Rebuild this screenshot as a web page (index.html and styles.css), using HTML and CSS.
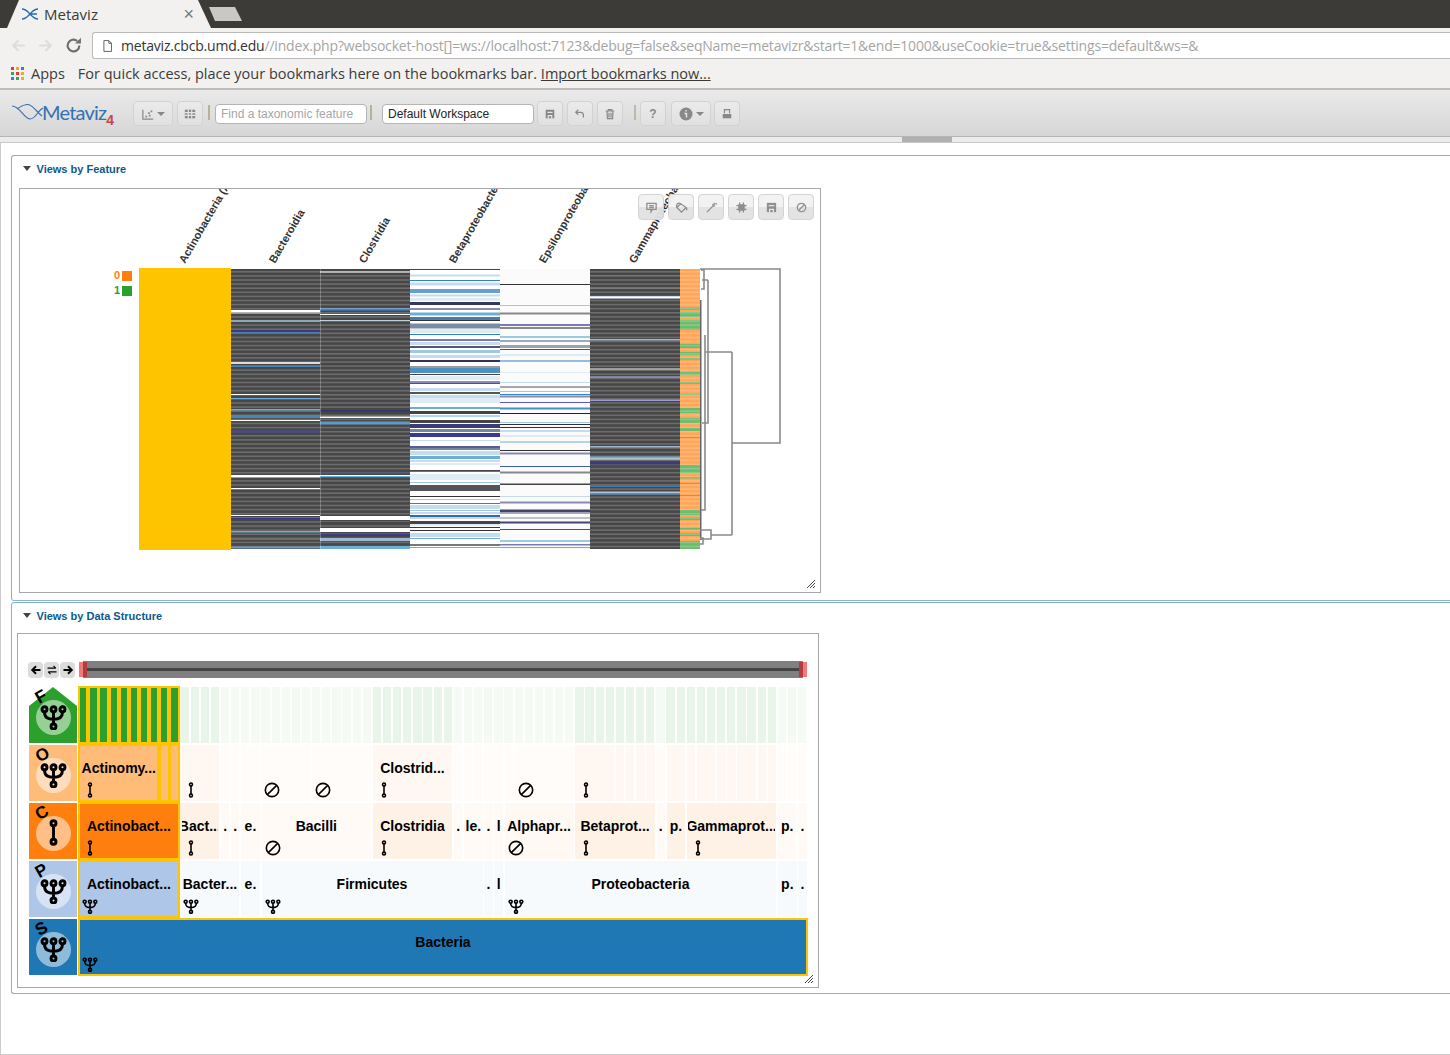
FILE: index.html
```html
<!DOCTYPE html>
<html lang="en">
<head>
    <meta charset="UTF-8">
    <meta name="viewport" content="width=device-width, initial-scale=1.0">
    <title>Metaviz</title>
    <link rel="stylesheet" href="styles.css">
</head>
<body>
    <!-- Icons used by the icicle chart -->
    <svg class="defs" width="0" height="0">
        <symbol id="fork" viewBox="0 0 24 24">
            <path d="M12 8V18.5M4 8c0 5 3 6.5 8 6.5s8-1.500 8-6.500"/>
            <circle cx="4" cy="5.500" r="2.200"/>
            <circle cx="12" cy="5.500" r="2.200"/>
            <circle cx="20" cy="5.500" r="2.200"/>
            <circle cx="12" cy="20.800" r="2.200"/>
        </symbol>
        <symbol id="seg" viewBox="0 0 24 24">
            <path d="M12 6V18"/>
            <circle cx="12" cy="3.800" r="2.200"/>
            <circle cx="12" cy="20.200" r="2.200"/>
        </symbol>
        <symbol id="ban" viewBox="0 0 24 24">
            <circle cx="12" cy="12" r="10"/>
            <path d="M5 19L19 5"/>
        </symbol>
    </svg>

    <!-- Browser window -->
    <div class="tabstrip">
        <div class="tab">
            <svg class="favicon" viewBox="0 0 16 12"><path d="M0 1C4 1 6 4 8 6S12 11 16 11M0 11C4 11 6 8 8 6S12 1 16 1M9 6H15"/></svg>
            <span class="tab-title">Metaviz</span>
            <span class="tab-close">×</span>
        </div>
        <div class="newtab"></div>
    </div>
    <div class="navbar">
        <svg class="nav-icon faint" viewBox="0 0 16 16"><path d="M14 8H3M8 3L3 8L8 13"/></svg>
        <svg class="nav-icon faint" viewBox="0 0 16 16"><path d="M2 8H13M8 3L13 8L8 13"/></svg>
        <svg class="nav-icon reload" viewBox="0 0 16 16"><path d="M13.500 8A5.500 5.500 0 1 1 11.500 3.800"/><path class="solid" d="M9.500 6H15V0.800Z"/></svg>
        <div class="urlbar">
            <svg class="doc-icon" viewBox="0 0 10 13"><path d="M1 .5H6.500L9.500 3.500V12.500H1ZM6.500 .5V3.500H9.500"/></svg>
            <span class="url-host">metaviz.cbcb.umd.edu</span><span class="url-rest">//index.php?websocket-host[]=ws://localhost:7123&amp;debug=false&amp;seqName=metavizr&amp;start=1&amp;end=1000&amp;useCookie=true&amp;settings=default&amp;ws=&amp;</span>
        </div>
    </div>
    <div class="bookmarks">
        <div class="apps-grid">
            <i class="r"></i><i class="y"></i><i class="b"></i>
            <i class="g"></i><i class="r"></i><i class="y"></i>
            <i class="b"></i><i class="g"></i><i class="y"></i>
        </div>
        <span class="apps">Apps</span>
        <span>For quick access, place your bookmarks here on the bookmarks bar. <u>Import bookmarks now...</u></span>
    </div>

    <!-- App toolbar -->
    <div class="toolbar">
        <div class="logo">
            <svg class="logo-wave" viewBox="0 0 31 16"><path d="M0 2C8 2 12 15 18 15S26 6 31 4M5 5C9 2 12 .5 16 .5S25 8 30 12"/></svg>
            <span class="logo-name">Metaviz</span><span class="logo-num">4</span>
        </div>
        <button class="tbtn wide"><svg viewBox="0 0 14 14"><path d="M1 2V13H13"/><path class="dots" d="M4 9h2v2H4zM7 5h2v2H7zM10 3h2v2h-2zM8 8h2v2H8z"/></svg><b class="caret"></b></button>
        <button class="tbtn"><svg viewBox="0 0 14 14"><path class="solid" d="M1 2H13V12H1Z"/><path class="cut" d="M1 5.500H13M1 8.500H13M5 2V12M9 2V12"/></svg></button>
        <i class="sep"></i>
        <input class="field search" type="text" placeholder="Find a taxonomic feature">
        <i class="sep"></i>
        <input class="field workspace" type="text" value="Default Workspace">
        <button class="tbtn"><svg viewBox="0 0 14 14"><path class="solid" d="M2 2H12V12H2Z"/><path class="cut" d="M4 5H10M5 12V9H9V12"/></svg></button>
        <button class="tbtn"><svg viewBox="0 0 14 14"><path d="M5 2L2 5L5 8M2 5H8C10.500 5 11 7 11 8.500V11"/></svg></button>
        <button class="tbtn"><svg viewBox="0 0 14 14"><path d="M2 3.500H12M5 3.500V2H9V3.500M3.500 3.500L4 12.500H10L10.500 3.500M5.800 5.500V11M8.200 5.500V11"/></svg></button>
        <i class="sep blue"></i>
        <button class="tbtn help">?</button>
        <button class="tbtn wide info"><svg viewBox="0 0 14 14"><circle class="solid" cx="7" cy="7" r="6.500"/><path class="cut" d="M7 3V4.500M5.500 6.500H7.500V10.500"/></svg><b class="caret"></b></button>
        <button class="tbtn"><svg viewBox="0 0 14 14"><path d="M4 6V2H10V6"/><path class="solid" d="M2 7H12V12H2Z"/></svg></button>
    </div>
    <div class="splitter"><div class="grip"></div></div>

    <main class="content">
        <section class="panel feature-panel">
            <h3 class="panel-head"><i class="arrow"></i>Views by Feature</h3>
            <div class="chart-box heat-box">
                <svg id="heatmap" class="heatmap" viewBox="20 189 800 403" width="800" height="403"></svg>
                <div class="chart-btns">
                    <button class="cbtn"><svg viewBox="0 0 14 14"><path d="M2 2.500H12V9H8L6.500 11.500V9H2ZM4.500 5H9.500M4.500 7H9.500"/></svg></button>
                    <button class="cbtn"><svg viewBox="0 0 14 14"><path d="M6 3L12 7L7 12L2 7ZM2 7C1 4 3 1 6 3M12 7L13 10"/></svg></button>
                    <button class="cbtn"><svg viewBox="0 0 14 14"><path d="M2 12L9 5M8 3.500L10.500 6M10 2V4M11 3H13"/></svg></button>
                    <button class="cbtn"><svg viewBox="0 0 14 14"><path class="solid" d="M3.500 3.500H10.500V10.500H3.500Z"/><path d="M5 1.500V12.500M9 1.500V12.500M1.500 5H12.500M1.500 9H12.500"/></svg></button>
                    <button class="cbtn"><svg viewBox="0 0 14 14"><path class="solid" d="M2 2H12V12H2Z"/><path class="cut" d="M4 5H10M5 12V9H9V12"/></svg></button>
                    <button class="cbtn"><svg viewBox="0 0 14 14"><circle cx="7" cy="7" r="4.500"/><path d="M4 10L10 4"/></svg></button>
                </div>
                <svg class="resize" viewBox="0 0 8 8"><path d="M0 8L8 0M3 8L8 3M6 8L8 6"/></svg>
            </div>
        </section>

        <section class="panel structure-panel">
            <h3 class="panel-head"><i class="arrow"></i>Views by Data Structure</h3>
            <div class="chart-box tree-box">
                <div class="tree-nav">
                    <div class="tree-btns">
                        <button class="nav-btn"><svg viewBox="0 0 16 16"><path d="M14 8H3M8 3L3 8L8 13"/></svg></button>
                        <button class="nav-btn swap"><svg viewBox="0 0 16 16"><path d="M2 5.500H13M10 2.500L13 5.500M14 10.500H3M6 13.500L3 10.500"/></svg></button>
                        <button class="nav-btn"><svg viewBox="0 0 16 16"><path d="M2 8H13M8 3L13 8L8 13"/></svg></button>
                    </div>
                    <div class="brush">
                        <i class="brush-line"></i>
                        <i class="handle left"></i>
                        <i class="handle right"></i>
                    </div>
                </div>
                <div id="icicle" class="icicle"></div>
                <svg class="resize" viewBox="0 0 8 8"><path d="M0 8L8 0M3 8L8 3M6 8L8 6"/></svg>
            </div>
        </section>
    </main>

    <script src="app.js"></script>
</body>
</html>
```
FILE: styles.css
```css
/* General styling */
* {
    box-sizing: border-box;
}
html, body {
    margin: 0;
    height: 100%;
    overflow: hidden;
}
body {
    background: white;
    color: #333;
    font-family: 'Liberation Sans', Arial, sans-serif;
}
.defs {
    position: absolute;
}
i {
    display: block;
}
/* Browser window */
.tabstrip {
    display: flex;
    height: 28px;
    background: #3c3b37;
}
.tab {
    display: flex;
    align-items: center;
    width: 212px;
    height: 28px;
    padding: 0 18px 0 22px;
    background: #f2f1f0;
    clip-path: polygon(7px 100%, 19px 0, 198px 0, 211px 100%);
}
.favicon {
    width: 16px;
    height: 12px;
    fill: none;
    stroke: #2b6cb0;
    stroke-width: 1.3;
}
.tab-title {
    flex: 1;
    margin-left: 6px;
    font: 15px 'Open Sans', sans-serif;
    color: #3c3b37;
}
.tab-close {
    color: #777;
    font-size: 18px;
    line-height: 1;
}
.newtab {
    width: 33px;
    height: 14px;
    margin: 7px 0 0 -3px;
    background: #c9c8c6;
    clip-path: polygon(0 0, 26px 0, 33px 100%, 6px 100%);
}
.navbar {
    display: flex;
    align-items: center;
    height: 32px;
    padding: 3px 0 0 10px;
    background: #f2f1f0;
}
.nav-icon {
    width: 17px;
    height: 17px;
    margin-right: 10px;
    fill: none;
    stroke: #ddd;
    stroke-width: 2;
}
.reload {
    margin: 0 10px 0 1px;
    stroke: #6e6e6e;
}
.reload .solid {
    fill: #6e6e6e;
    stroke: none;
}
.urlbar {
    display: flex;
    align-items: center;
    flex: 1;
    height: 27px;
    padding-left: 10px;
    background: white;
    border: 1px solid #bbb;
    border-right: none;
    border-radius: 3px 0 0 3px;
    font: 14px 'Open Sans', sans-serif;
    letter-spacing: -.195px;
    white-space: nowrap;
    overflow: hidden;
}
.doc-icon {
    width: 9px;
    height: 12px;
    margin-right: 9px;
    fill: none;
    stroke: #555;
}
.url-host {
    color: #333;
}
.url-rest {
    color: #a5a5a5;
}
.bookmarks {
    display: flex;
    align-items: center;
    height: 28px;
    padding: 0 0 2px 11px;
    background: #f2f1f0;
    font: 14.5px 'Open Sans', sans-serif;
    color: #3c3b37;
    white-space: nowrap;
}
.apps-grid {
    display: grid;
    grid-template-columns: repeat(3, 3px);
    gap: 2px;
    margin: 0 7px 0 0;
    width: 13px;
}
.apps-grid i {
    height: 3px;
}
.apps-grid .r { background: #e53935; }
.apps-grid .y { background: #f5a623; }
.apps-grid .b { background: #3b78e7; }
.apps-grid .g { background: #34a853; }
.apps {
    margin-right: 13px;
}
/* App toolbar */
.toolbar {
    display: flex;
    align-items: center;
    height: 49px;
    padding: 1px 0 0 12px;
    background: linear-gradient(#eaeaea, #d6d6d6);
    border-top: 2px solid #bdbdbd;
    border-bottom: 1px solid #b5b5b5;
}
.logo {
    display: flex;
    align-items: center;
    position: relative;
    width: 121px;
    height: 26px;
}
.logo-wave {
    width: 31px;
    height: 16px;
    fill: none;
    stroke: #3d75b5;
    stroke-width: 1.2;
    margin-top: -4px;
}
.logo-name {
    margin: -4px 0 0 -1px;
    font: 20px 'Lato', sans-serif;
    color: #3471b3;
    letter-spacing: -.8px;
}
.logo-num {
    margin-top: 12px;
    font: bold 14px 'Liberation Sans', sans-serif;
    color: #c9444f;
}
.tbtn, .cbtn {
    display: flex;
    align-items: center;
    justify-content: center;
    gap: 3px;
    width: 26px;
    height: 25px;
    margin: 0 4px 0 0;
    padding: 0;
    background: linear-gradient(#ebebeb, #e0e0e0);
    border: 1px solid #d2d2d2;
    border-radius: 4px;
}
.tbtn svg, .cbtn svg {
    width: 12px;
    height: 12px;
    fill: none;
    stroke: #888;
    stroke-width: 1.4;
}
.tbtn .solid, .cbtn .solid {
    fill: #888;
    stroke: none;
}
.tbtn .cut, .cbtn .cut {
    stroke: #e6e6e6;
}
.tbtn .dots {
    fill: #888;
    stroke: none;
}
.tbtn.wide {
    width: 40px;
}
.caret {
    width: 0;
    height: 0;
    border: 4px solid transparent;
    border-top-color: #888;
    border-bottom: none;
}
.help {
    color: #888;
    font: bold 12px 'Liberation Sans', sans-serif;
}
.tbtn.info {
    margin: 0 3px 0 1px;
}
.info svg {
    width: 14px;
    height: 14px;
}
.sep {
    width: 2px;
    height: 15px;
    margin: 0 5px 2px 1px;
    background: #b9b09c;
}
.sep.blue {
    margin: 0 4px 2px 7px;
    background: linear-gradient(#a9bdd2, #c9b68e);
}
.field {
    width: 152px;
    height: 20px;
    margin-right: 4px;
    padding: 0 5px;
    background: white;
    border: 1px solid #b4b4b4;
    border-radius: 4px;
    outline: none;
    font: 12px 'Liberation Sans', sans-serif;
    color: #222;
}
.field::placeholder {
    color: #a6a6a6;
}
.search {
    margin-right: 2px;
}
.workspace {
    margin: 0 3px 0 5px;
}
.splitter {
    height: 6px;
    padding-left: 902px;
    background: #ececec;
    border-bottom: 1px solid #c8c8c8;
}
.grip {
    width: 50px;
    height: 5px;
    background: #b0b0b0;
}
/* Panels */
.content {
    height: 912px;
    padding: 12px 0 0 10px;
    border-left: 1px solid #ccc;
    border-bottom: 1px solid #ccc;
}
.panel {
    border: 1px solid #a8a8a8;
    border-right: none;
    border-radius: 3px 0 0 3px;
}
.feature-panel {
    height: 446px;
    margin-bottom: 1px;
    padding-left: 7px;
    border-bottom-color: #8fb3cc;
}
.structure-panel {
    height: 392px;
    padding-left: 5px;
    border-color: #7fb0d2 #a8a8a8 #a8a8a8 #a8a8a8;
}
.panel-head {
    display: flex;
    align-items: center;
    margin: 0;
    color: #0b5a8c;
    font: bold 11px 'Liberation Sans', sans-serif;
}
.feature-panel .panel-head {
    height: 32px;
    padding: 0 0 7px 4px;
}
.structure-panel .panel-head {
    height: 30px;
    padding: 0 0 5px 6px;
}
.arrow {
    width: 0;
    height: 0;
    margin-right: 5.500px;
    border: 4px solid transparent;
    border-top: 5px solid #444;
    border-bottom: none;
}
.chart-box {
    position: relative;
    width: 802px;
    background: white;
    border: 1px solid #a8a8a8;
}
.heat-box {
    height: 405px;
}
.tree-box {
    height: 355px;
    padding: 27px 0 0 10px;
}
.heatmap {
    display: block;
}
.heatmap text {
    font: bold 11px 'Liberation Sans', sans-serif;
    fill: #333;
}
.chart-btns {
    position: absolute;
    top: 5px;
    left: 618px;
    display: flex;
    gap: 4px;
}
.cbtn {
    margin: 0;
    height: 26px;
    background: linear-gradient(#f2f2f2 50%, #e2e2e2 50%);
    opacity: .95;
}
.cbtn svg {
    width: 13px;
    height: 13px;
}
.resize {
    position: absolute;
    right: 5px;
    bottom: 4px;
    width: 8px;
    height: 8px;
    fill: none;
    stroke: #444;
}
/* Icicle chart */
.tree-nav {
    display: flex;
    align-items: center;
    height: 17px;
    margin-bottom: 9px;
}
.tree-btns {
    display: flex;
    gap: 1px;
    width: 51px;
}
.nav-btn {
    display: flex;
    align-items: center;
    justify-content: center;
    width: 15px;
    height: 16px;
    padding: 0;
    background: #dcdcdc;
    border: none;
    border-radius: 4px;
}
.nav-btn svg {
    width: 12px;
    height: 12px;
    fill: none;
    stroke: black;
    stroke-width: 2.600;
}
.swap svg {
    stroke-width: 1.500;
}
.brush {
    position: relative;
    width: 720px;
    height: 17px;
    margin-left: 4px;
    background: #808080;
}
.brush-line {
    height: 3px;
    margin-top: 7px;
    background: #444;
}
.handle {
    position: absolute;
    top: 1px;
    width: 8px;
    height: 15px;
    background: linear-gradient(90deg, #f07a7a 50%, #b63b3b 50%);
}
.handle.left {
    left: -4px;
}
.handle.right {
    right: -4px;
    background: linear-gradient(90deg, #b63b3b 50%, #f07a7a 50%);
}
.icicle {
    display: flex;
    flex-direction: column;
    gap: 2px;
}
.tree-row {
    display: flex;
    height: 56px;
    margin-left: 1px;
}
.row-label {
    position: relative;
    flex: none;
    width: 48px;
    margin-right: 2.200px;
}
.row-label::before {
    content: '';
    position: absolute;
    inset: 0;
}
.row-F .row-label::before {
    background: #2ca02c;
    clip-path: polygon(0 19px, 50% 0, 100% 19px, 100% 100%, 0 100%);
}
.row-O .row-label::before { background: #ffbb78; }
.row-C .row-label::before { background: #ff7f0e; }
.row-P .row-label::before { background: #aec7e8; }
.row-S .row-label::before { background: #1f77b4; }
.row-disc {
    position: absolute;
    top: 13px;
    left: 7px;
    display: flex;
    align-items: center;
    justify-content: center;
    width: 35px;
    height: 35px;
    padding: 0 1px 3px 0;
    border-radius: 50%;
    background: rgba(255,255,255,.5);
}
.row-letter {
    position: absolute;
    top: 0;
    left: 7px;
    font: bold 17px/20px 'Liberation Sans', sans-serif;
    color: black;
    transform: rotate(-30deg);
}
.row-disc svg {
    width: 27px;
    height: 27px;
    fill: none;
    stroke: black;
    stroke-width: 2.600;
}
.row-cells {
    display: flex;
    gap: 1.830px;
}
.cell {
    display: flex;
    flex-direction: column;
    flex: none;
    min-width: 0;
    height: 56px;
}
.cell.sel {
    box-shadow: 0 0 0 1px #ffc400, inset 0 0 0 1px #ffc400;
}
.cell-text {
    display: flex;
    justify-content: center;
    height: 20px;
    margin: 13px 1.500px 0;
    overflow: hidden;
    font: bold 14px/20px 'Liberation Sans', sans-serif;
    color: black;
    white-space: nowrap;
}
.cell-icon {
    width: 16px;
    height: 16px;
    margin: 4px 0 0 3px;
    flex: none;
    fill: none;
    stroke: black;
    stroke-width: 2.400;
}
```
FILE: app.js
```js
'use strict'
// ---------------------------------------------------------------------
// HEATMAP

const SVG_TOP = 269
const SVG_BOTTOM = 549

const LIGHT = '#c6dbef', PALE = '#e0ecf4', SKY = '#9ecae1', MID = '#6baed6', BLUE = '#3182bd'
const NAVY = '#3b3b8a', DUSK = '#7a7ab5', INK = '#333', GREY = '#888'

// every band is [y, height, colour]
const COLUMNS = [
    { x: 231, w: 89, dark: true, bands: [
        [310, 2.5, '#fff'], [313, 1, '#999'], [320, 2, '#8fa6b5'], [330, 2, '#3b3b7a'], [332, 1, '#4f7fb0'],
        [362, 2, '#ddd'], [365.5, 1.500, '#4a84b8'], [394, 1, '#fff'], [398, 1, MID], [409, 1.500, MID],
        [415, 3, '#4a84b8'], [420, 1, '#fff'], [430, 3, '#4b4b7a'], [475, 2, '#fff'], [477, 1, MID],
        [488, 1, '#fff'], [489, 1, '#4a84b8'], [515, 1, '#fff'], [518, 2, NAVY], [527, 1, '#4a4a7a'],
        [531, 1.500, MID], [539, 1, '#3a7ab0'], [546.5, 2, '#6a9cc0']
    ] },
    { x: 320, w: 90, dark: true, bands: [
        [269, 1, NAVY], [271.5, 1, '#fff'], [308, 1.500, '#7da0c0'], [310, 1, '#3a6a9a'], [314, 1, '#fff'],
        [320, 1, '#c0d0e0'], [410, 2, '#333a6a'], [413, 1, NAVY], [416.5, 1.500, '#fff'], [421.5, 3, '#5a9bc8'],
        [472.5, 1, '#4a4a7a'], [475, 1, '#fff'], [476, 1, MID], [516, 4, '#fff'], [522, 1, '#444'],
        [528, 4, '#fff'], [534, 2, NAVY], [538, 3, '#a0b8d0'], [546, 3, MID]
    ] },
    { x: 410, w: 90, base: '#fff', bands: [
        [298, 3, PALE], [329, 4, PALE], [342, 3, LIGHT], [376, 4, PALE], [395, 3, LIGHT], [451, 4, LIGHT],
        [460, 2, LIGHT], [474, 6, PALE], [505, 4, LIGHT], [512, 2, LIGHT], [524, 2, PALE], [533, 4, LIGHT],
        [269, 1, NAVY], [274.5, 2, LIGHT], [280, 1, BLUE], [282.5, 3, LIGHT], [289, 4, '#6a9fcb'],
        [294.5, 2, LIGHT], [302, 3, '#35355e'], [308, 2, '#8c8ca8'], [312.5, 3, MID], [317, 3, '#4b7ba5'],
        [320, 1, '#333'], [323.5, 5, '#7a8ba3'], [334, 1, BLUE], [339, 2, DUSK], [346, 2, '#555570'],
        [350, 3, SKY], [355, 3, LIGHT], [360, 2, '#33334f'], [366, 2, '#999'], [368, 5, '#4e8fc4'],
        [374, 1, '#444'], [381, 2, '#8a8abc'], [383, 1, '#555'], [388, 3, LIGHT], [392, 2, '#555'],
        [398, 5, PALE], [407, 2, MID], [411, 3, '#444'], [415.5, 1, MID], [420, 3, '#444'],
        [424, 4, '#3b3b7a'], [429, 3, '#778899'], [433, 4, NAVY], [440, 1, LIGHT], [446, 3, '#5a5a9a'],
        [448, 2, '#6a8aa0'], [456, 3, MID], [463, 2, PALE], [470, 1, '#444'], [471, 1, BLUE],
        [482, 1, SKY], [485, 6, '#555'], [496, 1, INK], [499, 1, SKY], [503, 1, BLUE],
        [510, 1, SKY], [515, 2, '#2c6fb0'], [517.5, 1, '#aaa'], [521, 3, '#444'], [527, 1, INK],
        [530, 1, INK], [538, 1, MID], [544, 2, '#777'], [547, 1, MID]
    ] },
    { x: 500, w: 90, base: '#fbfbfb', bands: [
        [284, 1, INK], [305, 1, SKY], [312.5, 2, GREY], [324, 2, DUSK], [327, 2, GREY],
        [336, 2, SKY], [340.5, 1, '#2c5f8a'], [345, 3, '#99a3aa'], [349, 1, '#555'], [354, 2, PALE],
        [360.5, 1, BLUE], [372, 1, PALE], [382, 1, LIGHT], [386.5, 1, '#555'], [391, 1, SKY],
        [394, 1, BLUE], [395.5, 2, '#8a8ab5'], [402, 1, '#5a5ab5'], [407.5, 2, '#4292c6'], [413, 1, '#222'],
        [422, 1, SKY], [424, 1, INK], [427, 1, INK], [430, 2, LIGHT], [435.5, 1, LIGHT],
        [441.5, 1, MID], [450, 1, INK], [452.5, 2, '#8a8ab5'], [466, 1, '#3c5fb5'], [471.5, 2, GREY],
        [483.5, 1.500, '#444'], [496, 1, LIGHT], [501.5, 2, '#8a8ab5'], [509.5, 3, '#444466'], [513, 1, '#aaa'],
        [517.5, 1, GREY], [521.5, 2, '#444477'], [529, 1, '#555'], [540, 2, SKY], [544, 1.500, DUSK],
        [547, 1, MID]
    ] },
    { x: 590, w: 90, dark: true, bands: [
        [273, 1, NAVY], [275, 1, '#6a7a90'], [287.5, 1, GREY], [296, 1, '#c6dbef'], [297, 1.500, '#fff'],
        [339, 1.500, '#9ab8d0'], [367, 1, '#3b3b9a'], [368.5, 1, '#eee'], [375.5, 1, NAVY], [376.5, 1, '#c0c8e0'],
        [399.5, 1.500, '#9a9ad0'], [446, 1.500, '#9ab8d0'], [456.5, 2, MID], [458.5, 1, '#fff'], [461.5, 3, '#3b3b7a'],
        [485.5, 1.500, '#3a7ab0'], [491.5, 2, '#b0c4d4'], [493.5, 1.500, '#5a7a9a']
    ] }
]

const GREEN_RUNS = [
    [307.5, 2.5], [312, 5], [320, 10], [344, 4], [352, 3], [358, 1.500], [372, 3], [382, 2],
    [394, 1], [408, 5], [418, 5], [428, 3], [437, 1], [465, 8], [477, 1.500], [483, 1],
    [495, 1], [510, 5], [517, 3], [528, 2], [533, 3], [541, 8]
]

const LABELS = [
    ['Actinobacteria (Actinobacteria)', 185], ['Bacteroidia', 275], ['Clostridia', 365],
    ['Betaproteobacteria', 455], ['Epsilonproteobacteria', 545], ['Gammaproteobacteria', 635]
]

const DENDRO = [
    'M700 269H780V443H732', 'M732 352V535', 'M732 352H705', 'M732 535H711',
    'M708 280V423H702', 'M708 280H702', 'M705 335V510H701', 'M701 270H704V289H701',
    'M700 530H711V539H700', 'M700 538H703V544H700'
]

const rect = (x, y, w, h, fill) =>
    `<rect x="${x}" y="${y}" width="${w}" height="${h}" fill="${fill}"/>`

const stripes = (x, w, fill, step = 4.1) => {
    let out = ''
    for (let y = SVG_TOP + 2; y < SVG_BOTTOM; y += step) {
        out += rect(x, y, w, 1.6, fill)
    }
    return out
}

const drawColumn = col => {
    let out = rect(col.x, SVG_TOP, col.w, SVG_BOTTOM - SVG_TOP, col.dark ? '#474747' : col.base)
    if (col.dark) out += stripes(col.x, col.w, '#6c6c6c')
    out += col.bands.map(([y, h, c]) => rect(col.x, y, col.w, h, c)).join('')
    return out
}

const drawHeatmap = () => {
    let out = '<defs><clipPath id="clip"><rect x="20" y="189" width="800" height="403"/></clipPath></defs>'
    out += '<g clip-path="url(#clip)">'
    out += LABELS.map(([name, x]) =>
        `<text transform="translate(${x} 264) rotate(-60)">${name}</text>`).join('')
    out += '</g>'

    // legend
    out += '<text x="114" y="279" style="fill:#ff7f0e">0</text>' + rect(122, 271, 10, 10, '#ff7f0e')
    out += '<text x="114" y="294" style="fill:#2ca02c">1</text>' + rect(122, 286, 10, 10, '#2ca02c')

    out += rect(139, 268, 92, 282, '#ffc400')
    out += COLUMNS.map(drawColumn).join('')
    out += rect(320, SVG_TOP, 1, SVG_BOTTOM - SVG_TOP, 'rgba(255,255,255,.25)')

    // annotation column
    out += rect(680, SVG_TOP, 20, SVG_BOTTOM - SVG_TOP, '#ffa658')
    out += GREEN_RUNS.map(([y, h]) => rect(680, y, 20, h, '#6dbb6d')).join('')
    out += stripes(680, 20, 'rgba(255,255,255,.2)')
    out += rect(700, 300, 1.5, 240, '#666')

    out += `<path d="${DENDRO.join('')}" fill="none" stroke="#8a8a8a" stroke-width="1.6"/>`
    document.getElementById('heatmap').innerHTML = out
}

// ---------------------------------------------------------------------
// ICICLE

const LEAF_STEP = 10.13
const LEAF_GAP = 1.83

const FILL = {
    F: { strong: '#2ca02c', mid: '#e9f5e9', light: '#f5faf5' },
    O: { strong: '#ffbb78', mid: '#fff7f1', light: '#fffcf9' },
    C: { strong: '#ff7f0e', mid: '#fef1e6', soft: '#fff8f3', light: '#fffaf6' },
    P: { strong: '#aec7e8', light: '#f6fafd' },
    S: { strong: '#1f77b4' }
}

// every cell is [from leaf, to leaf, tone, label, icon]
const singles = (from, to, tone) => {
    let out = []
    for (let i = from; i < to; i++) out.push([i, i + 1, tone])
    return out
}

const toneOfLeaf = i => {
    if (i < 10) return 'strong'
    if ((i >= 10 && i < 14) || (i >= 29 && i < 37) || (i >= 49 && i < 57) || (i >= 58 && i < 69)) return 'mid'
    return 'light'
}

const ROWS = [
    { id: 'F', icon: 'fork', cells: singles(0, 72).map(c => [c[0], c[1], toneOfLeaf(c[0])]) },
    { id: 'O', icon: 'fork', cells: [
        [0, 8, 'strong', 'Actinomy...', 'seg'], [8, 9, 'strong'], [9, 10, 'strong'],
        [10, 14, 'mid', '', 'seg'], ...singles(14, 16, 'light'), [16, 18, 'light'],
        [18, 23, 'light', '', 'ban'], [23, 29, 'light', '', 'ban'],
        [29, 37, 'mid', 'Clostrid...', 'seg'], ...singles(37, 43, 'light'),
        [43, 49, 'light', '', 'ban'], [49, 53, 'mid', '', 'seg'], ...singles(53, 57, 'mid'),
        [57, 58, 'light'], [58, 60, 'mid'], [60, 61, 'mid'], [61, 63, 'mid'], [63, 64, 'mid'], [64, 65, 'mid'],
        [65, 67, 'mid'], [67, 68, 'mid'], [68, 69, 'mid'], [69, 70, 'light'], [70, 71, 'light'], [71, 72, 'light']
    ] },
    { id: 'C', icon: 'seg', cells: [
        [0, 10, 'strong', 'Actinobact...', 'seg'], [10, 14, 'mid', 'Bact...', 'seg'],
        [14, 15, 'light', '.'], [15, 16, 'light', '.'], [16, 18, 'light', 'e.'],
        [18, 29, 'light', 'Bacilli', 'ban'], [29, 37, 'mid', 'Clostridia', 'seg'],
        [37, 38, 'light', '.'], [38, 40, 'light', 'le.'], [40, 41, 'light', '.'], [41, 42, 'light', 'l'],
        [42, 49, 'soft', 'Alphapr...', 'ban'], [49, 57, 'mid', 'Betaprot...', 'seg'],
        [57, 58, 'light', '.'], [58, 60, 'mid', 'p.'], [60, 69, 'mid', 'Gammaprot...', 'seg'],
        [69, 71, 'light', 'p.'], [71, 72, 'light', '.']
    ] },
    { id: 'P', icon: 'fork', cells: [
        [0, 10, 'strong', 'Actinobact...', 'fork'], [10, 16, 'light', 'Bacter...', 'fork'],
        [16, 18, 'light', 'e.'], [18, 40, 'light', 'Firmicutes', 'fork'],
        [40, 41, 'light', '.'], [41, 42, 'light', 'l'], [42, 69, 'light', 'Proteobacteria', 'fork'],
        [69, 71, 'light', 'p.'], [71, 72, 'light', '.']
    ] },
    { id: 'S', icon: 'fork', cells: [[0, 72, 'strong', 'Bacteria', 'fork']] }
]

const useIcon = (id, cls) =>
    `<svg class="${cls}" viewBox="0 0 24 24"><use href="#${id}"/></svg>`

const isSelected = (row, from) => row.id === 'S' || from < 10

const drawCell = (row, [from, to, tone, label = '', icon]) => {
    const width = (to - from) * LEAF_STEP - LEAF_GAP
    const sel = isSelected(row, from) ? ' sel' : ''
    const iconHtml = icon ? useIcon(icon, 'cell-icon') : ''
    const body = row.id === 'F' ? '' : `<div class="cell-text">${label}</div>${iconHtml}`
    return `<div class="cell${sel}" style="width:${width}px;background:${FILL[row.id][tone]}">${body}</div>`
}

const drawRow = row => `
    <div class="tree-row row-${row.id}">
        <div class="row-label">
            <div class="row-disc">${useIcon(row.icon, '')}</div>
            <span class="row-letter">${row.id}</span>
        </div>
        <div class="row-cells">${row.cells.map(c => drawCell(row, c)).join('')}</div>
    </div>`

drawHeatmap()
document.getElementById('icicle').innerHTML = ROWS.map(drawRow).join('')
```
